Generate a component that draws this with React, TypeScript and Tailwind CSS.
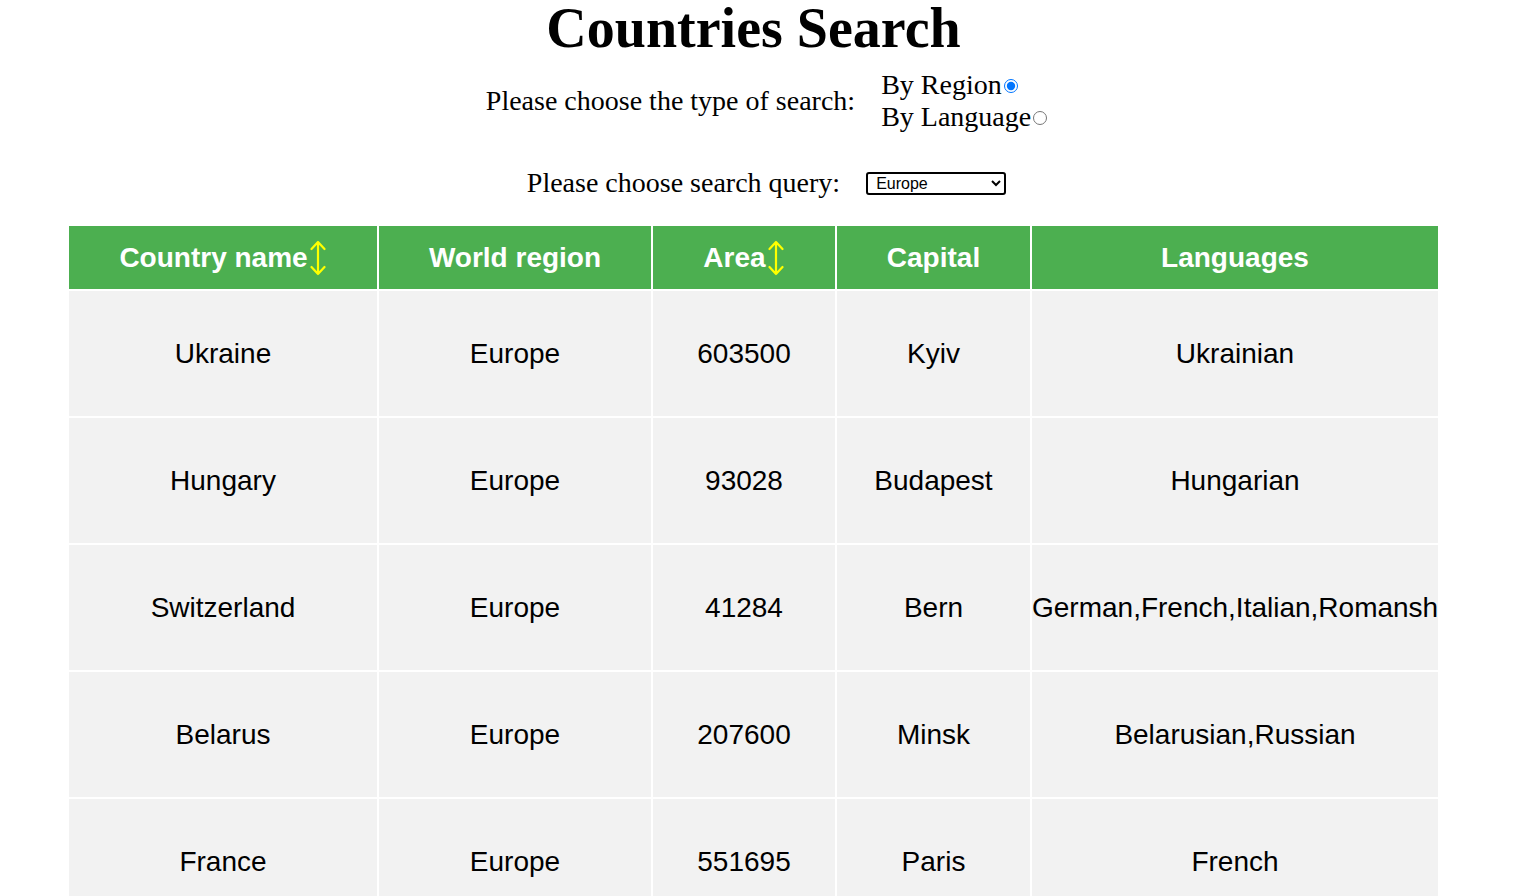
import React, { useState } from "react";

type Country = {
  name: string;
  region: string;
  area: number;
  capital: string;
  languages: string[];
};

const countries: Country[] = [
  { name: "Ukraine", region: "Europe", area: 603500, capital: "Kyiv", languages: ["Ukrainian"] },
  { name: "Hungary", region: "Europe", area: 93028, capital: "Budapest", languages: ["Hungarian"] },
  { name: "Switzerland", region: "Europe", area: 41284, capital: "Bern", languages: ["German", "French", "Italian", "Romansh"] },
  { name: "Belarus", region: "Europe", area: 207600, capital: "Minsk", languages: ["Belarusian", "Russian"] },
  { name: "France", region: "Europe", area: 551695, capital: "Paris", languages: ["French"] },
];

function SortArrow() {
  return (
    <svg width="18" height="36" viewBox="0 0 18 36" className="inline-block align-middle -mt-[2px] ml-[1px]" fill="none">
      <path d="M9 2 V34 M2.5 9 L9 2 L15.5 9 M2.5 27 L9 34 L15.5 27" stroke="#ffff00" strokeWidth="2.2" strokeLinecap="round" strokeLinejoin="round" />
    </svg>
  );
}

export default function App() {
  const [searchType, setSearchType] = useState("region");
  const [query, setQuery] = useState("Europe");

  return (
    <div className="min-h-screen w-[1507px] bg-white text-black">
      <h1 className="text-center font-bold text-[56px] leading-[56px] font-['Liberation_Serif',serif]">
        Countries Search
      </h1>

      {/* search type */}
      <div className="flex justify-center items-center mt-[13px] pl-[26px] font-['Liberation_Serif',serif] text-[28px] leading-[32px]">
        <span className="mr-[26px]">Please choose the type of search:</span>
        <div className="flex flex-col">
          <label className="flex items-center">
            By Region
            <input
              type="radio"
              name="type"
              checked={searchType === "region"}
              onChange={() => setSearchType("region")}
              className="w-[14px] h-[14px] m-0 mt-[2px] ml-[2px]"
            />
          </label>
          <label className="flex items-center">
            By Language
            <input
              type="radio"
              name="type"
              checked={searchType === "language"}
              onChange={() => setSearchType("language")}
              className="w-[14px] h-[14px] m-0 mt-[2px] ml-[2px]"
            />
          </label>
        </div>
      </div>

      {/* search query */}
      <div className="flex justify-center items-center mt-[34px] pl-[26px] font-['Liberation_Serif',serif] text-[28px] leading-[32px]">
        <span className="mr-[26px]">Please choose search query:</span>
        <select
          value={query}
          onChange={(e) => setQuery(e.target.value)}
          className="w-[140px] h-[23px] border-2 border-black rounded-[3px] text-[16px] leading-[18px] font-['Liberation_Sans',sans-serif] pl-[4px] bg-white"
        >
          <option>Europe</option>
          <option>Asia</option>
          <option>Africa</option>
          <option>Americas</option>
          <option>Oceania</option>
        </select>
      </div>

      <table className="mx-auto mt-[25px] w-[1373px] table-fixed border-separate border-spacing-[2px] font-['Liberation_Sans',Arial,sans-serif] text-[28px]">
        <colgroup>
          <col className="w-[308px]" />
          <col className="w-[272px]" />
          <col className="w-[182px]" />
          <col className="w-[193px]" />
          <col className="w-[406px]" />
        </colgroup>
        <thead>
          <tr className="bg-[#4caf50] text-white font-bold h-[63px]">
            <th className="p-0 text-center">
              Country name
              <SortArrow />
            </th>
            <th className="p-0 text-center">World region</th>
            <th className="p-0 text-center">
              Area
              <SortArrow />
            </th>
            <th className="p-0 text-center">Capital</th>
            <th className="p-0 text-center">Languages</th>
          </tr>
        </thead>
        <tbody>
          {countries.map((c) => (
            <tr key={c.name} className="h-[125px]">
              <td className="bg-[#f2f2f2] p-0 text-center">{c.name}</td>
              <td className="bg-[#f2f2f2] p-0 text-center">{c.region}</td>
              <td className="bg-[#f2f2f2] p-0 text-center">{c.area}</td>
              <td className="bg-[#f2f2f2] p-0 text-center">{c.capital}</td>
              <td className="bg-[#f2f2f2] p-0 text-center whitespace-nowrap">{c.languages.join(",")}</td>
            </tr>
          ))}
        </tbody>
      </table>
    </div>
  );
}
